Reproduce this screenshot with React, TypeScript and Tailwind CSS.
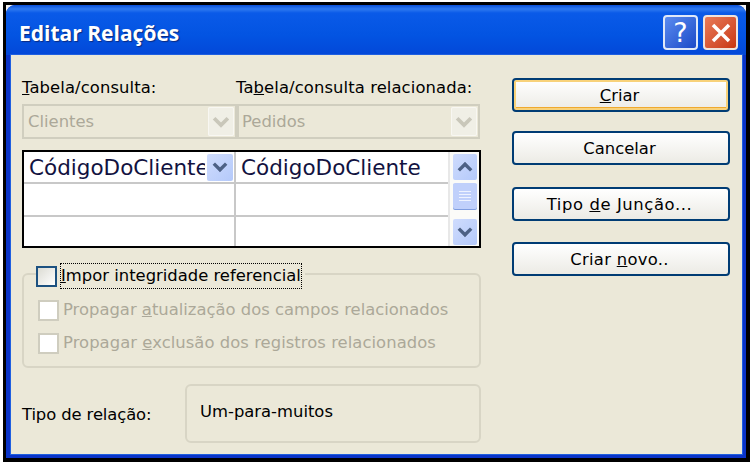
import React from "react";

const font = { fontFamily: '"DejaVu Sans", sans-serif' };

function Chevron({ dir = "down", color, size = 16 }: { dir?: "down" | "up"; color: string; size?: number }) {
  return (
    <svg width={size} height={size} viewBox="0 0 16 16" fill="none">
      <path d={dir === "down" ? "M2.5 5 L8 10.5 L13.5 5" : "M2.5 11 L8 5.5 L13.5 11"} stroke={color} strokeWidth="3" />
    </svg>
  );
}

function Combo({ text, className, pad }: { text: string; className: string; pad: string }) {
  return (
    <div className={`flex h-full items-center justify-between border-2 border-[#d0cebf] pr-[1px] ${className}`}>
      <span className={`text-[#aca899] ${pad}`}>{text}</span>
      <div className="flex h-[29px] w-[26px] items-center justify-center rounded-[2px] bg-[#f0efe6] shadow-[inset_0_0_0_1px_#f8f7f2]">
        <Chevron color="#c9c7ba" size={20} />
      </div>
    </div>
  );
}

function Btn({ children, def, className = "" }: { children: React.ReactNode; def?: boolean; className?: string }) {
  return (
    <div
      className={`flex h-[34px] w-[218px] items-center justify-center rounded-[4px] border-2 border-[#003c74] bg-gradient-to-b from-white to-[#ecebe5] pr-[3px] pt-[2px] text-black ${
        def ? "shadow-[inset_0_0_0_2px_#f8d27a,inset_0_-3px_0_0_#efa92f]" : ""
      } ${className}`}
    >
      {children}
    </div>
  );
}

function DropBtn({ dir = "down", className = "" }: { dir?: "down" | "up"; className?: string }) {
  return (
    <div className={`flex items-center justify-center rounded-[2px] bg-gradient-to-br from-[#cfdcfd] to-[#b4c9fa] ${className}`}>
      <Chevron dir={dir} color="#4d6185" size={18} />
    </div>
  );
}

export default function App() {
  return (
    <div className="h-[462px] w-[750px] overflow-hidden bg-white pl-[3px] pt-[2px] text-[16.4px] leading-[24px]" style={font}>
      <div className="flex h-[460px] w-[747px] flex-col bg-black pb-[4px] pl-[3px] pr-[4px] pt-[3px]">
        <div className="h-[453px] bg-[#f4f4f4]">
          <div className="flex h-[453px] flex-col overflow-hidden rounded-t-[9px] bg-[#0a34c8]">
            <div className="flex h-[50px] shrink-0 justify-between bg-[linear-gradient(to_bottom,#0a50d8_0px,#2f7af0_4px,#0a5ae8_8px,#0354e2_30px,#0348d8_100%)] pl-[13px] pr-[8px] pt-[10px]">
              <span
                className="text-[21px] font-bold leading-[36px] text-white [text-shadow:1px_1px_1px_#0a2a80]"
                style={{ fontFamily: '"Open Sans", sans-serif' }}
              >
                Editar Relações
              </span>
              <div className="flex gap-[5px]">
                <div className="flex h-[35px] w-[35px] items-center justify-center rounded-[4px] border-2 border-[#dfe8f8] bg-gradient-to-br from-[#5b8bef] to-[#1c49c8] text-[27px] text-white">
                  ?
                </div>
                <div className="flex h-[35px] w-[35px] items-center justify-center rounded-[4px] border-2 border-[#efe3dc] bg-gradient-to-br from-[#e87a58] to-[#c8350e]">
                  <svg width="24" height="24" viewBox="0 0 24 24">
                    <path d="M4 4 L20 20 M20 4 L4 20" stroke="white" strokeWidth="3.5" />
                  </svg>
                </div>
              </div>
            </div>
            <div className="mb-[4px] ml-[5px] mr-[4px] flex h-[399px] bg-[#ebe8d8] pl-[11px] text-black shadow-[0_0_0_1px_#1f5fe0]">
              <div className="w-[459px]">
                <div className="mt-[21px] flex h-[24px] tracking-[0.1px]">
                  <div className="w-[214px]">
                    <u>T</u>abela/consulta:
                  </div>
                  <div>
                    Ta<u>b</u>ela/consulta relacionada:
                  </div>
                </div>
                <div className="mt-[4px] flex h-[35px]">
                  <Combo text="Clientes" className="w-[215px]" pad="pl-[4px]" />
                  <Combo text="Pedidos" className="w-[243px]" pad="pl-[3px]" />
                </div>
                <div className="mt-[11px] flex h-[98px] border-2 border-black bg-white">
                  <div className="flex flex-1 flex-col">
                    <div className="flex h-[32px] border-b-2 border-[#c8c8c8]">
                      <div className="flex w-[212px] items-center justify-between overflow-hidden border-r-2 border-[#c8c8c8] pl-[5px] pr-[1px]">
                        <span className="w-[176px] overflow-hidden whitespace-nowrap text-[21.5px] leading-[31px] text-[#12123f]">
                          CódigoDoCliente
                        </span>
                        <DropBtn className="h-[27px] w-[26px] shrink-0" />
                      </div>
                      <div className="flex-1 pl-[5px] text-[21.5px] leading-[31px] text-[#12123f]">CódigoDoCliente</div>
                    </div>
                    <div className="flex h-[33px] border-b-2 border-[#c8c8c8]">
                      <div className="w-[212px] border-r-2 border-[#c8c8c8]" />
                    </div>
                    <div className="flex flex-1">
                      <div className="w-[212px] border-r-2 border-[#c8c8c8]" />
                    </div>
                  </div>
                  <div className="flex w-[31px] flex-col border-l-2 border-[#e8e8e8] bg-[#fbfbf8] pl-[3px] pr-[2px] pt-[2px]">
                    <DropBtn dir="up" className="h-[26px] w-[24px]" />
                    <div className="mt-[3px] flex h-[26px] w-[24px] flex-col items-center justify-center gap-[2px] rounded-[2px] bg-[#c0d0fb] shadow-[0_1px_0_0_#7f9de0]">
                      <div className="h-[1px] w-[12px] bg-[#eef3ff]" />
                      <div className="h-[1px] w-[12px] bg-[#eef3ff]" />
                      <div className="h-[1px] w-[12px] bg-[#eef3ff]" />
                      <div className="h-[1px] w-[12px] bg-[#eef3ff]" />
                    </div>
                    <DropBtn className="mt-[10px] h-[26px] w-[24px]" />
                  </div>
                </div>
                <div className="relative mt-[25px] h-[95px] rounded-[6px] border-2 border-[#d8d5c5] pl-[14px] pt-[24px] text-[#aca899]">
                  <div className="absolute -top-[11px] left-[12px] flex items-center bg-[#ebe8d8] pr-[4px] text-black">
                    <div className="h-[21px] w-[21px] border-2 border-[#1c5180] bg-gradient-to-br from-[#dcdcd4] to-white" />
                    <div className="ml-[4px] h-[24px] whitespace-nowrap outline-dotted outline-1 outline-black">
                      <u>I</u>mpor integridade referencial
                    </div>
                  </div>
                  <div className="flex h-[22px] items-center">
                    <div className="h-[21px] w-[21px] border-2 border-[#cfcdbf] bg-white" />
                    <div className="ml-[4px]">
                      Propagar <u>a</u>tualização dos campos relacionados
                    </div>
                  </div>
                  <div className="mt-[11px] flex h-[22px] items-center">
                    <div className="h-[21px] w-[21px] border-2 border-[#cfcdbf] bg-white" />
                    <div className="ml-[4px] tracking-[0.05px]">
                      Propagar <u>e</u>xclusão dos registros relacionados
                    </div>
                  </div>
                </div>
                <div className="mt-[16px] flex h-[59px]">
                  <div className="w-[163px] pt-[19px] tracking-[-0.1px]">Tipo de relação:</div>
                  <div className="flex-1 rounded-[6px] border-2 border-[#d8d5c5] pl-[13px] pt-[14px]">Um-para-muitos</div>
                </div>
              </div>
              <div className="ml-[31px] flex flex-col pt-[23px]">
                <Btn def>
                  <span>
                    <u>C</u>riar
                  </span>
                </Btn>
                <Btn className="mt-[19px]">Cancelar</Btn>
                <Btn className="mt-[22px]">
                  <span className="tracking-[0.6px]">
                    Tipo <u>d</u>e Junção...
                  </span>
                </Btn>
                <Btn className="mt-[21px]">
                  <span className="tracking-[0.3px]">
                    Criar <u>n</u>ovo..
                  </span>
                </Btn>
              </div>
            </div>
          </div>
        </div>
      </div>
    </div>
  );
}
